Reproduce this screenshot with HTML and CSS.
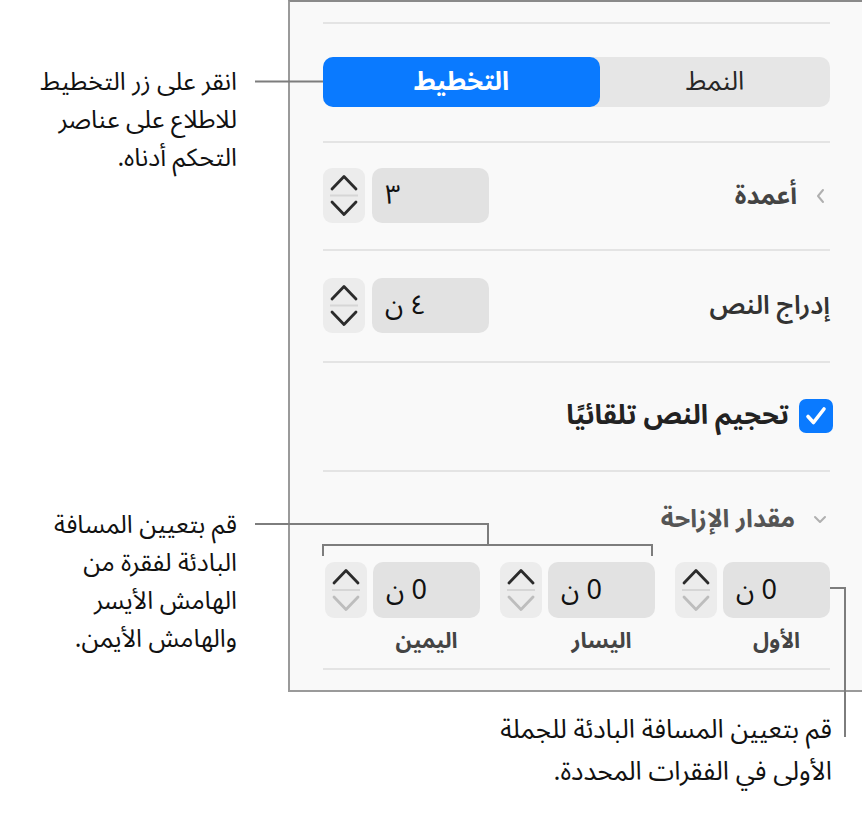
FILE: index.html
```html
<!DOCTYPE html>
<html lang="ar">
<head>
    <meta charset="UTF-8">
    <meta name="viewport" content="width=device-width, initial-scale=1.0">
    <title>التخطيط</title>
    <link rel="stylesheet" href="styles.css">
</head>
<body>
    <div class="page">
        <div class="top">
            <div class="notes" dir="rtl">
                <p class="note note-layout">انقر على زر التخطيط<br>للاطلاع على عناصر<br>التحكم أدناه.</p>
                <p class="note note-margins">قم بتعيين المسافة<br>البادئة لفقرة من<br>الهامش الأيسر<br>والهامش الأيمن.</p>
            </div>

            <div class="panel" dir="rtl">
                <div class="sep"></div>

                <div class="section seg-section">
                    <div class="segmented">
                        <div class="seg">النمط</div>
                        <div class="seg seg-active">التخطيط</div>
                    </div>
                </div>
                <div class="sep"></div>

                <!-- أعمدة -->
                <div class="section row row-cols">
                    <div class="row-label">
                        <svg class="chev" width="12" height="16" viewBox="0 0 12 16"><polyline points="8,2 3,8 8,14"/></svg>
                        <span>أعمدة</span>
                    </div>
                    <div class="spin">
                        <div class="field">٣</div>
                        <div class="stepper">
                            <svg width="42" height="55" viewBox="0 0 42 55">
                                <polyline class="arr" points="9,21 21,8.5 33,21"/>
                                <line class="mid" x1="7" y1="27.5" x2="35" y2="27.5"/>
                                <polyline class="arr" points="9,34 21,46.5 33,34"/>
                            </svg>
                        </div>
                    </div>
                </div>
                <div class="sep"></div>

                <!-- إدراج النص -->
                <div class="section row row-inset">
                    <div class="row-label plain"><span>إدراج النص</span></div>
                    <div class="spin">
                        <div class="field">٤ ن</div>
                        <div class="stepper">
                            <svg width="42" height="55" viewBox="0 0 42 55">
                                <polyline class="arr" points="9,21 21,8.5 33,21"/>
                                <line class="mid" x1="7" y1="27.5" x2="35" y2="27.5"/>
                                <polyline class="arr" points="9,34 21,46.5 33,34"/>
                            </svg>
                        </div>
                    </div>
                </div>
                <div class="sep"></div>

                <!-- تحجيم تلقائي -->
                <div class="section check-section">
                    <label class="check">
                        <svg width="34" height="34" viewBox="0 0 34 34">
                            <rect width="34" height="34" rx="7" fill="#0a7aff"/>
                            <polyline points="9,17.5 14.5,23.5 25,10" fill="none" stroke="#fff" stroke-width="3.6" stroke-linecap="round" stroke-linejoin="round"/>
                        </svg>
                        <span>تحجيم النص تلقائيًا</span>
                    </label>
                </div>
                <div class="sep"></div>

                <!-- مقدار الإزاحة -->
                <div class="section indent-section">
                    <div class="row-label indent-head">
                        <svg class="chev" width="14" height="12" viewBox="0 0 14 12"><polyline points="2,4 7,9 12,4"/></svg>
                        <span>مقدار الإزاحة</span>
                    </div>
                    <div class="indent-grid">
                        <div class="indent-col">
                            <div class="spin small">
                                <div class="field">0 ن</div>
                                <div class="stepper">
                                    <svg width="42" height="56" viewBox="0 0 42 56">
                                        <polyline class="arr" points="9,21 21,8.5 33,21"/>
                                        <line class="mid" x1="7" y1="28" x2="35" y2="28"/>
                                        <polyline class="arr off" points="9,35 21,47.5 33,35"/>
                                    </svg>
                                </div>
                            </div>
                            <div class="col-label">الأول</div>
                        </div>
                        <div class="indent-col">
                            <div class="spin small">
                                <div class="field">0 ن</div>
                                <div class="stepper">
                                    <svg width="42" height="56" viewBox="0 0 42 56">
                                        <polyline class="arr" points="9,21 21,8.5 33,21"/>
                                        <line class="mid" x1="7" y1="28" x2="35" y2="28"/>
                                        <polyline class="arr off" points="9,35 21,47.5 33,35"/>
                                    </svg>
                                </div>
                            </div>
                            <div class="col-label">اليسار</div>
                        </div>
                        <div class="indent-col">
                            <div class="spin small">
                                <div class="field">0 ن</div>
                                <div class="stepper">
                                    <svg width="42" height="56" viewBox="0 0 42 56">
                                        <polyline class="arr" points="9,21 21,8.5 33,21"/>
                                        <line class="mid" x1="7" y1="28" x2="35" y2="28"/>
                                        <polyline class="arr off" points="9,35 21,47.5 33,35"/>
                                    </svg>
                                </div>
                            </div>
                            <div class="col-label">اليمين</div>
                        </div>
                    </div>
                </div>
                <div class="sep"></div>
                <div class="panel-foot"></div>
            </div>
        </div>

        <p class="note note-first" dir="rtl">قم بتعيين المسافة البادئة للجملة<br>الأولى في الفقرات المحددة.</p>

        <!-- خطوط الشرح -->
        <svg class="leaders" width="862" height="822" viewBox="0 0 862 822">
            <path d="M255 81.5 H323"/>
            <path d="M255 524 H488 V545"/>
            <path d="M323 556 V545 H652 V556"/>
            <path d="M830 588 H845 V737"/>
        </svg>
    </div>
</body>
</html>
```

FILE: styles.css
```css
/* صفحة الشرح */
body {
    margin: 0;
    background-color: #fff;
    font-family: "Noto Sans Arabic", "DejaVu Sans", sans-serif;
    color: #1d1d1d;
}
.page {
    position: relative;
    width: 862px;
    height: 822px;
    overflow: hidden;
}
.top {
    display: flex;
}
.notes {
    width: 288px;
    flex-shrink: 0;
}
.note {
    margin: 0;
    font-size: 25px;
    line-height: 38px;
    text-align: right;
    color: #111;
}
.note-layout {
    margin-top: 63px;
    padding-right: 51px;
}
.note-margins {
    margin-top: 329px;
    padding-right: 51px;
}
.note-first {
    margin-top: 17px;
    margin-right: 30px;
    font-size: 26px;
    line-height: 42px;
}

/* اللوحة */
.panel {
    flex-shrink: 0;
    width: 507px;
    padding: 0 40px 0 33px;
    background-color: #f9f9f9;
    border: 2px solid #9a9a9a;
    border-top-color: #8a8a8a;
}
.sep {
    height: 2px;
    background-color: #e4e4e4;
}
.sep:first-child {
    margin-top: 20px;
}
.panel-foot {
    height: 20px;
}
.seg-section {
    padding: 33px 0 34px;
}
.segmented {
    display: flex;
    height: 50px;
    background-color: #e6e6e6;
    border-radius: 10px;
}
.seg {
    flex: 1;
    display: flex;
    align-items: center;
    justify-content: center;
    font-size: 26px;
    line-height: 30px;
    color: #262626;
}
.seg-active {
    flex: 0 0 277px;
    background-color: #0a7aff;
    border-radius: 10px;
    color: #fff;
    font-weight: bold;
}

.row {
    display: flex;
    justify-content: space-between;
    align-items: center;
}
.row-cols {
    padding: 25px 0 26px;
}
.row-inset {
    padding: 27px 0 28px;
}
.row-label {
    display: flex;
    align-items: center;
    gap: 18px;
    font-size: 25px;
    line-height: 30px;
    font-weight: bold;
    color: #444;
}
.row-label.plain {
    font-weight: 600;
    font-size: 26px;
    color: #333;
}
.chev {
    margin-right: 3px;
    fill: none;
    stroke: #b0b0b0;
    stroke-width: 2;
    stroke-linecap: round;
    stroke-linejoin: round;
}

.spin {
    display: flex;
    gap: 7px;
}
.field {
    width: 117px;
    height: 55px;
    box-sizing: border-box;
    padding-left: 13px;
    display: flex;
    align-items: center;
    justify-content: flex-end;
    background-color: #e2e2e2;
    border-radius: 10px;
    font-size: 27px;
    color: #111;
}
.stepper {
    width: 42px;
    height: 55px;
    background-color: #ececec;
    border-radius: 9px;
}
.stepper svg {
    display: block;
}
.arr {
    fill: none;
    stroke: #2b2b2b;
    stroke-width: 2.8;
    stroke-linecap: round;
    stroke-linejoin: round;
}
.arr.off {
    stroke: #bdbdbd;
}
.mid {
    stroke: #d6d6d6;
    stroke-width: 2;
}

.check-section {
    padding: 36px 0 37px;
}
.check {
    display: flex;
    align-items: center;
    gap: 10px;
    height: 34px;
    margin-right: -3px;
    font-size: 27px;
    line-height: 34px;
    font-weight: bold;
    color: #222;
}
.check svg {
    display: block;
}

.indent-section {
    padding: 35px 0 16px;
}
.indent-head {
    height: 24px;
    line-height: 24px;
    color: #555;
}
.indent-grid {
    display: grid;
    grid-template-columns: repeat(3, 156px);
    column-gap: 19px;
    margin-top: 31px;
}
.spin.small {
    gap: 6px;
}
.spin.small .field {
    width: 107px;
    height: 56px;
}
.spin.small .stepper {
    height: 56px;
}
.col-label {
    width: 107px;
    height: 22px;
    margin-top: 12px;
    text-align: center;
    font-size: 22px;
    line-height: 22px;
    font-weight: bold;
    color: #444;
}

/* خطوط الشرح */
.leaders {
    position: absolute;
    left: 0;
    top: 0;
    pointer-events: none;
    fill: none;
    stroke: #7d7d7d;
    stroke-width: 2;
}
```
